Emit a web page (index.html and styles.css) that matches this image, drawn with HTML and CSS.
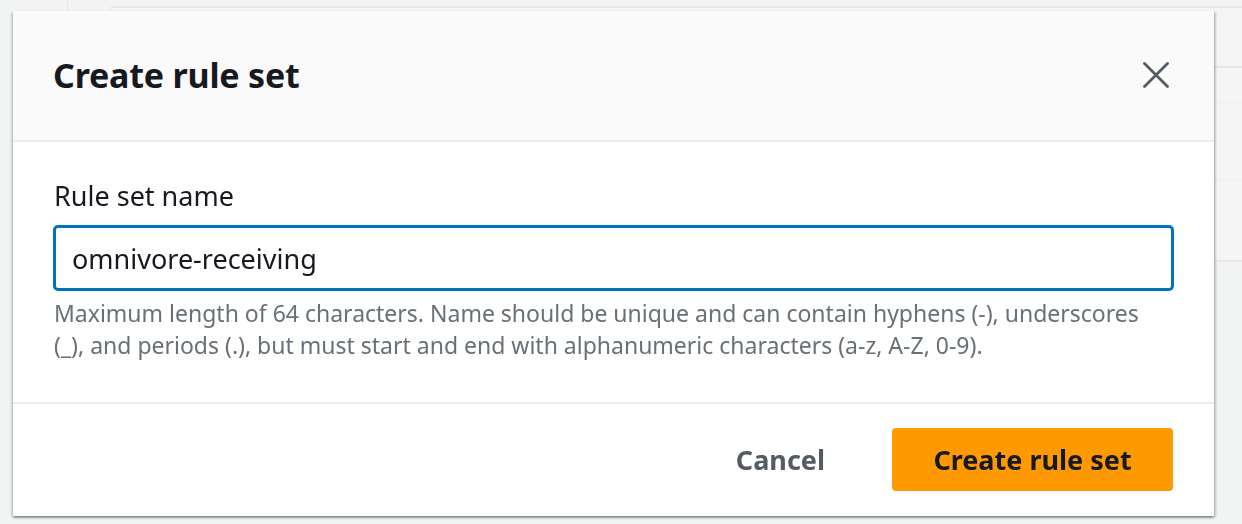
FILE: index.html
```html
<!DOCTYPE html>
<html lang="en">
<head>
<meta charset="utf-8">
<title>Create rule set</title>
<link rel="stylesheet" href="styles.css">
</head>
<body>
<div class="page">
  <div class="rail"></div>
  <div class="card">
    <div class="card-head"></div>
    <div class="card-row"></div>
    <div class="card-row"></div>
    <div class="card-row last"></div>
  </div>
</div>
<div class="overlay">
  <div class="modal" role="dialog" aria-labelledby="modal-title">
    <header class="modal-header">
      <h2 id="modal-title" class="modal-title">Create rule set</h2>
      <button class="close-btn" type="button" aria-label="Close">
        <svg class="close-icon" viewBox="0 0 26 26" width="26" height="26" aria-hidden="true">
          <path d="M1.5 1.5 L24.5 24.5 M24.5 1.5 L1.5 24.5" fill="none" stroke="#545b64" stroke-width="2.8" stroke-linecap="round"/>
        </svg>
      </button>
    </header>
    <div class="modal-body">
      <label class="field-label" for="rule-set-name">Rule set name</label>
      <input class="field-input" id="rule-set-name" type="text" value="omnivore-receiving">
      <p class="field-help">Maximum length of 64 characters. Name should be unique and can contain hyphens (-), underscores (_), and periods (.), but must start and end with alphanumeric characters (a-z, A-Z, 0-9).</p>
    </div>
    <footer class="modal-footer">
      <button class="btn btn-link" type="button">Cancel</button>
      <button class="btn btn-primary" type="button">Create rule set</button>
    </footer>
  </div>
</div>
</body>
</html>
```

FILE: styles.css
```css
* { box-sizing: border-box; }

html, body {
  margin: 0;
  padding: 0;
}

body {
  width: 1242px;
  height: 524px;
  overflow: hidden;
  background: #f2f3f3;
  font-family: "Noto Sans", "Open Sans", sans-serif;
  color: #16191f;
}

/* background page (dimmed under overlay) */
.page {
  display: flex;
  align-items: flex-start;
  height: 524px;
  padding-top: 6px;
}

.rail {
  width: 68px;
  height: 14px;
  border-right: 1px solid #e4e6e6;
  margin-top: -6px;
}

.card {
  margin-left: 40px;
  flex: 1;
  background: #f5f5f5;
  border-top: 2px solid #e6e8e8;
  border-top-left-radius: 6px;
  display: flex;
  flex-direction: column;
}

.card-head {
  height: 60px;
  border-bottom: 2px solid #e4e6e6;
  border-left: 1px solid #e6e8e8;
  border-top-left-radius: 6px;
}

.card-row {
  height: 35px;
  border-bottom: 1px solid #eeefef;
}

.card-row + .card-row {
  height: 77px;
}

.card-row.last {
  height: 82px;
  border-bottom: 2px solid #e6e8e8;
}

/* modal */
.overlay {
  position: fixed;
  inset: 0;
  display: flex;
  align-items: flex-start;
  padding: 11px 0 0 13px;
}

.modal {
  width: 1201px;
  height: 505px;
  background: #ffffff;
  display: flex;
  flex-direction: column;
  box-shadow: 0 2px 2px 0 rgba(0, 28, 36, 0.35),
              2px 1px 2px 0 rgba(0, 28, 36, 0.18),
              -2px 1px 2px 0 rgba(0, 28, 36, 0.12);
}

.modal-header {
  height: 131px;
  flex: none;
  background: #fafafa;
  border-bottom: 2px solid #eaeded;
  display: flex;
  align-items: center;
  justify-content: space-between;
  padding: 0 45px 2px 40px;
}

.modal-title {
  margin: 0;
  font-size: 34px;
  line-height: 44px;
  font-weight: 700;
  color: #16191f;
  letter-spacing: -0.2px;
}

.close-btn {
  border: 0;
  background: none;
  padding: 0;
  width: 26px;
  height: 26px;
  display: flex;
  cursor: pointer;
}

.modal-body {
  flex: none;
  height: 262px;
  padding: 39px 40px 0 40px;
  border-bottom: 2px solid #eaeded;
  display: flex;
  flex-direction: column;
}

.field-label {
  font-size: 27px;
  line-height: 30px;
  color: #16191f;
  margin-left: 1px;
}

.field-input {
  margin-top: 14px;
  width: 100%;
  height: 66px;
  border: 3px solid #0073bb;
  border-radius: 5px;
  padding: 0 16px;
  font-family: inherit;
  font-size: 27px;
  color: #16191f;
  background: #ffffff;
  outline: none;
}

.field-help {
  margin: 6px 0 0 1px;
  font-size: 23px;
  line-height: 32px;
  color: #687078;
}

.modal-footer {
  flex: 1;
  display: flex;
  justify-content: flex-end;
  align-items: flex-start;
  padding: 24px 41px 0 0;
  gap: 46px;
}

.btn {
  font-family: inherit;
  font-weight: 700;
  font-size: 27px;
  height: 63px;
  border: 0;
  border-radius: 4px;
  cursor: pointer;
  display: flex;
  align-items: center;
  justify-content: center;
}

.btn-link {
  background: none;
  color: #545b64;
  padding: 0 21px;
}

.btn-primary {
  width: 281px;
  background: #ff9900;
  color: #16191f;
}
```
